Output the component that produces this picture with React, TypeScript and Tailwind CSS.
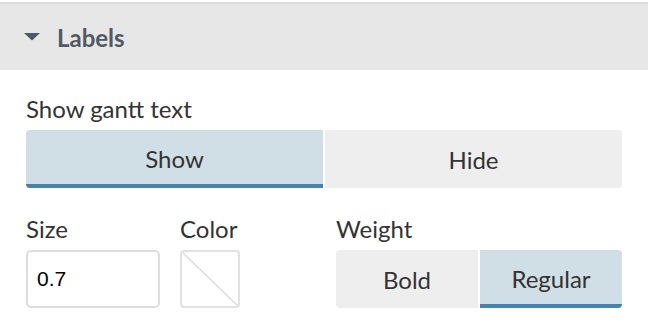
import React, { useState } from 'react';

const font = { fontFamily: 'Lato, "Noto Sans", sans-serif' };

const Segment: React.FC<{
  options: string[];
  value: string;
  onChange: (v: string) => void;
}> = ({ options, value, onChange }) => (
  <div className="flex gap-[2px]">
    {options.map((opt, i) => {
      const active = opt === value;
      const rounded = i === 0 ? 'rounded-l-[4px]' : i === options.length - 1 ? 'rounded-r-[4px]' : '';
      return (
        <button
          key={opt}
          type="button"
          onClick={() => onChange(opt)}
          className={`flex-1 h-[58px] text-[24px] leading-[29px] text-[#333] ${rounded} ${
            active ? 'bg-[#d0dee5] border-b-4 border-[#4682ab] pt-[2px]' : 'bg-[#eeeeee]'
          }`}
        >
          {opt}
        </button>
      );
    })}
  </div>
);

export default function App() {
  const [showText, setShowText] = useState('Show');
  const [weight, setWeight] = useState('Regular');
  const [size, setSize] = useState('0.7');

  return (
    <div className="w-[648px] h-[334px] bg-white pt-[2px]" style={font}>
      {/* Section header */}
      <div className="h-[68px] bg-[#e7e7e7] border-t-2 border-[#dadada] flex items-center pl-[24px] gap-[17px]">
        <svg width="16" height="8" viewBox="0 0 16 8" className="mt-[-1px]">
          <path d="M0 0 H16 L8 7.5 Z" fill="#4f5a64" />
        </svg>
        <span className="text-[24px] leading-[29px] font-bold text-[#4f5a64]">Labels</span>
      </div>

      <div className="pl-[26px] pr-[26px] pt-[24px]">
        <div className="text-[24px] text-[#333] leading-[29px] mb-[7px]">Show gantt text</div>
        <Segment options={['Show', 'Hide']} value={showText} onChange={setShowText} />

        <div className="flex mt-[26px]">
          <div className="w-[154px]">
            <div className="text-[24px] text-[#333] leading-[29px] mb-[7px]">Size</div>
            <input
              value={size}
              onChange={e => setSize(e.target.value)}
              className="w-[134px] h-[58px] border-2 border-[#dddddd] rounded-[5px] px-[9px] text-[21px] text-black outline-none"
              style={{ fontFamily: '"Liberation Sans", Arial, sans-serif' }}
            />
          </div>
          <div className="w-[156px]">
            <div className="text-[24px] text-[#333] leading-[29px] mb-[7px]">Color</div>
            <div className="w-[60px] h-[58px] border-2 border-[#e2e2e2] rounded-[4px] overflow-hidden">
              <svg width="56" height="54" viewBox="0 0 56 54">
                <line x1="0" y1="0" x2="56" y2="54" stroke="#dddddd" strokeWidth="1.5" />
              </svg>
            </div>
          </div>
          <div className="flex-1">
            <div className="text-[24px] text-[#333] leading-[29px] mb-[7px]">Weight</div>
            <Segment options={['Bold', 'Regular']} value={weight} onChange={setWeight} />
          </div>
        </div>
      </div>
    </div>
  );
}
